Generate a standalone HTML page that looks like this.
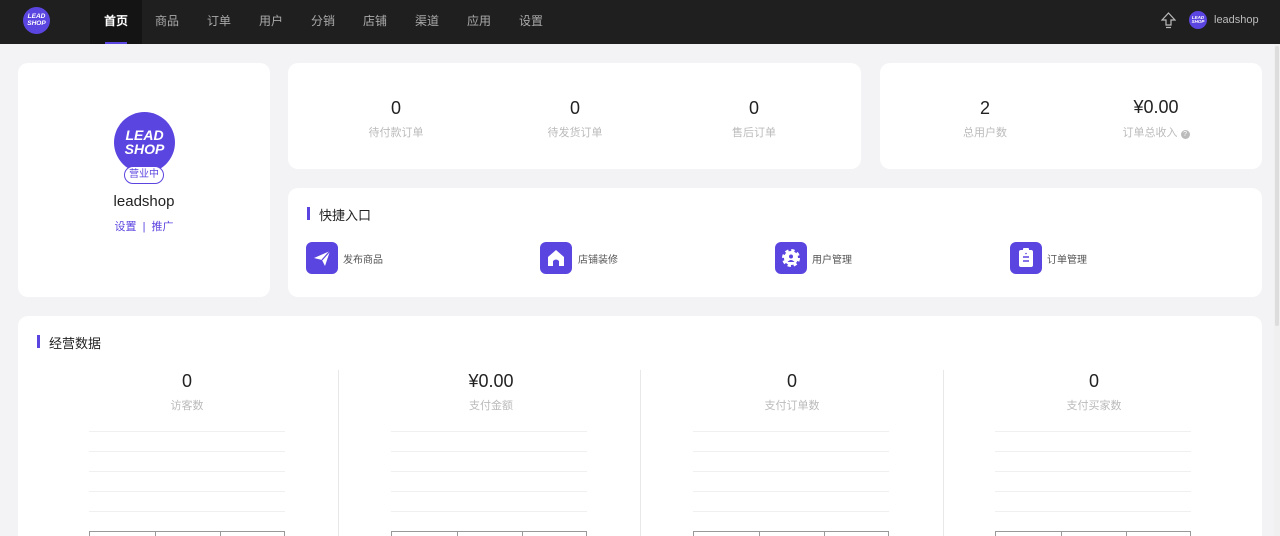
<!DOCTYPE html>
<html style="overflow:hidden;height:536px"><head><meta charset="utf-8"><style>
*{margin:0;padding:0;box-sizing:border-box}
body{width:1280px;height:536px;overflow:hidden;background:#f3f3f5;font-family:"Liberation Sans","Noto Sans CJK SC",sans-serif;position:relative}
.hd{position:absolute;left:0;top:0;width:1280px;height:44px;background:#1f1f1f}
.logo{position:absolute;border-radius:50%;background:#5b45e0;color:#fff;font-style:italic;font-weight:bold;text-align:center;line-height:1}
.nav{position:absolute;top:0;height:44px;line-height:42px;font-size:12px;color:#aaa;width:52px;text-align:center}
.nav.a{background:#141414;color:#fff;font-weight:bold}
.nav.a:after{content:"";position:absolute;left:15px;right:15px;bottom:0;height:2px;background:#5b45e0}
.card{position:absolute;background:#fff;border-radius:10px}
.num{position:absolute;font-size:18px;color:#222;text-align:center;width:160px;font-weight:500}
.lbl{position:absolute;font-size:11px;color:#bbb;text-align:center;width:160px}
.ttl{position:absolute;font-size:13px;color:#222}
.ttl:before{content:"";position:absolute;left:-12px;top:2px;width:3px;height:13px;background:#5b45e0}
.qi{position:absolute;top:242px;width:32px;height:32px;border-radius:6px;background:#5b45e0}
.qt{position:absolute;top:251px;font-size:10px;color:#555}
.vl{position:absolute;top:370px;width:1px;height:166px;background:#e8e8e8}
.gl{position:absolute;height:1px;background:#f0f0f0;width:196px}
.ax{position:absolute;top:531px;height:5px;width:196px;border-top:1px solid #999;border-left:1px solid #999;border-right:1px solid #999}
.ax i{position:absolute;top:0;width:1px;height:5px;background:#999}
</style></head><body>
<div class="hd">
<div class="logo" style="left:23px;top:7px;width:27px;height:27px;font-size:6.5px;padding-top:7px">LEAD<br>SHOP</div>
<div class="nav a" style="left:90px">首页</div>
<div class="nav" style="left:141px">商品</div>
<div class="nav" style="left:193px">订单</div>
<div class="nav" style="left:245px">用户</div>
<div class="nav" style="left:297px">分销</div>
<div class="nav" style="left:349px">店铺</div>
<div class="nav" style="left:401px">渠道</div>
<div class="nav" style="left:453px">应用</div>
<div class="nav" style="left:505px">设置</div>
<svg style="position:absolute;left:1161px;top:12px" width="15" height="17" viewBox="0 0 15 17"><path d="M7.5 1 L14 8 H10 V13 H5 V8 H1 Z M5 15.5 H10" fill="none" stroke="#bbb" stroke-width="1.2"/></svg>
<div class="logo" style="left:1189px;top:11px;width:18px;height:18px;font-size:4.5px;padding-top:4.5px">LEAD<br>SHOP</div>
<div style="position:absolute;left:1214px;top:14px;font-size:11px;color:#bbb">leadshop</div>
</div>
<div style="position:absolute;right:0;top:44px;width:6px;height:492px;background:#f0f0f0"></div>
<div style="position:absolute;right:1px;top:46px;width:4px;height:280px;background:#ddd;border-radius:2px"></div>

<div class="card" style="left:18px;top:63px;width:252px;height:234px"></div>
<div class="logo" style="left:114px;top:112px;width:61px;height:61px;font-size:14px;padding-top:16px">LEAD<br>SHOP</div>
<div style="position:absolute;left:124px;top:166px;width:40px;height:18px;border:1px solid #5b45e0;border-radius:9px;background:#fff;color:#5b45e0;font-size:10px;text-align:center;line-height:16px">营业中</div>
<div style="position:absolute;left:18px;width:252px;top:193px;text-align:center;font-size:15px;color:#222">leadshop</div>
<div style="position:absolute;left:18px;width:252px;top:218px;text-align:center;font-size:11px;color:#5b45e0">设置 &nbsp;|&nbsp; 推广</div>

<div class="card" style="left:288px;top:63px;width:573px;height:106px"></div>
<div class="num" style="left:316px;top:98px">0</div><div class="lbl" style="left:316px;top:124px">待付款订单</div>
<div class="num" style="left:495px;top:98px">0</div><div class="lbl" style="left:495px;top:124px">待发货订单</div>
<div class="num" style="left:674px;top:98px">0</div><div class="lbl" style="left:674px;top:124px">售后订单</div>
<div class="card" style="left:880px;top:63px;width:382px;height:106px"></div>
<div class="num" style="left:905px;top:98px">2</div><div class="lbl" style="left:905px;top:124px">总用户数</div>
<div class="num" style="left:1076px;top:97px">¥0.00</div><div class="lbl" style="left:1076px;top:124px">订单总收入 <span style="display:inline-block;width:9px;height:9px;border-radius:50%;background:#bbb;color:#fff;font-size:7px;line-height:9px">?</span></div>

<div class="card" style="left:288px;top:188px;width:974px;height:109px"></div>
<div class="ttl" style="left:319px;top:205px">快捷入口</div>
<div class="qi" style="left:306px"><svg width="32" height="32" viewBox="0 0 32 32"><path d="M8 16 L24 9 L19 24 L16 18 Z" fill="#fff"/><path d="M16 18 L24 9" stroke="#5b45e0" stroke-width="1.2"/></svg></div><div class="qt" style="left:343px">发布商品</div>
<div class="qi" style="left:540px"><svg width="32" height="32" viewBox="0 0 32 32"><path d="M8 15 L16 8 L24 15 V24 H19 V19 Q16 16 13 19 V24 H8 Z" fill="#fff"/></svg></div><div class="qt" style="left:578px">店铺装修</div>
<div class="qi" style="left:775px"><svg width="32" height="32" viewBox="0 0 32 32"><circle cx="16" cy="16" r="7" fill="#fff" stroke="#fff" stroke-width="4" stroke-dasharray="3 2.5"/><circle cx="16" cy="14.5" r="2" fill="#5b45e0"/><path d="M12.5 20 Q16 16 19.5 20" fill="#5b45e0"/></svg></div><div class="qt" style="left:812px">用户管理</div>
<div class="qi" style="left:1010px"><svg width="32" height="32" viewBox="0 0 32 32"><rect x="9" y="8" width="14" height="17" rx="2" fill="#fff"/><rect x="13" y="6" width="6" height="3" rx="1" fill="#fff"/><path d="M13 15 H19 M13 19 H19" stroke="#5b45e0" stroke-width="1.5"/><circle cx="16" cy="11.5" r="0.8" fill="#5b45e0"/></svg></div><div class="qt" style="left:1047px">订单管理</div>

<div class="card" style="left:18px;top:316px;width:1244px;height:220px;border-radius:10px 10px 0 0"></div>
<div class="ttl" style="left:49px;top:333px">经营数据</div>
<div class="vl" style="left:338px"></div><div class="vl" style="left:640px"></div><div class="vl" style="left:943px"></div>

<div class="num" style="left:107px;top:371px">0</div><div class="lbl" style="left:107px;top:397px">访客数</div>
<div class="num" style="left:411px;top:371px">¥0.00</div><div class="lbl" style="left:411px;top:397px">支付金额</div>
<div class="num" style="left:712px;top:371px">0</div><div class="lbl" style="left:712px;top:397px">支付订单数</div>
<div class="num" style="left:1014px;top:371px">0</div><div class="lbl" style="left:1014px;top:397px">支付买家数</div>

<div class="gl" style="left:89px;top:431px"></div><div class="gl" style="left:89px;top:451px"></div><div class="gl" style="left:89px;top:471px"></div><div class="gl" style="left:89px;top:491px"></div><div class="gl" style="left:89px;top:511px"></div>
<div class="gl" style="left:391px;top:431px"></div><div class="gl" style="left:391px;top:451px"></div><div class="gl" style="left:391px;top:471px"></div><div class="gl" style="left:391px;top:491px"></div><div class="gl" style="left:391px;top:511px"></div>
<div class="gl" style="left:693px;top:431px"></div><div class="gl" style="left:693px;top:451px"></div><div class="gl" style="left:693px;top:471px"></div><div class="gl" style="left:693px;top:491px"></div><div class="gl" style="left:693px;top:511px"></div>
<div class="gl" style="left:995px;top:431px"></div><div class="gl" style="left:995px;top:451px"></div><div class="gl" style="left:995px;top:471px"></div><div class="gl" style="left:995px;top:491px"></div><div class="gl" style="left:995px;top:511px"></div>
<div class="ax" style="left:89px"><i style="left:65px"></i><i style="left:130px"></i></div>
<div class="ax" style="left:391px"><i style="left:65px"></i><i style="left:130px"></i></div>
<div class="ax" style="left:693px"><i style="left:65px"></i><i style="left:130px"></i></div>
<div class="ax" style="left:995px"><i style="left:65px"></i><i style="left:130px"></i></div>
</body></html>
